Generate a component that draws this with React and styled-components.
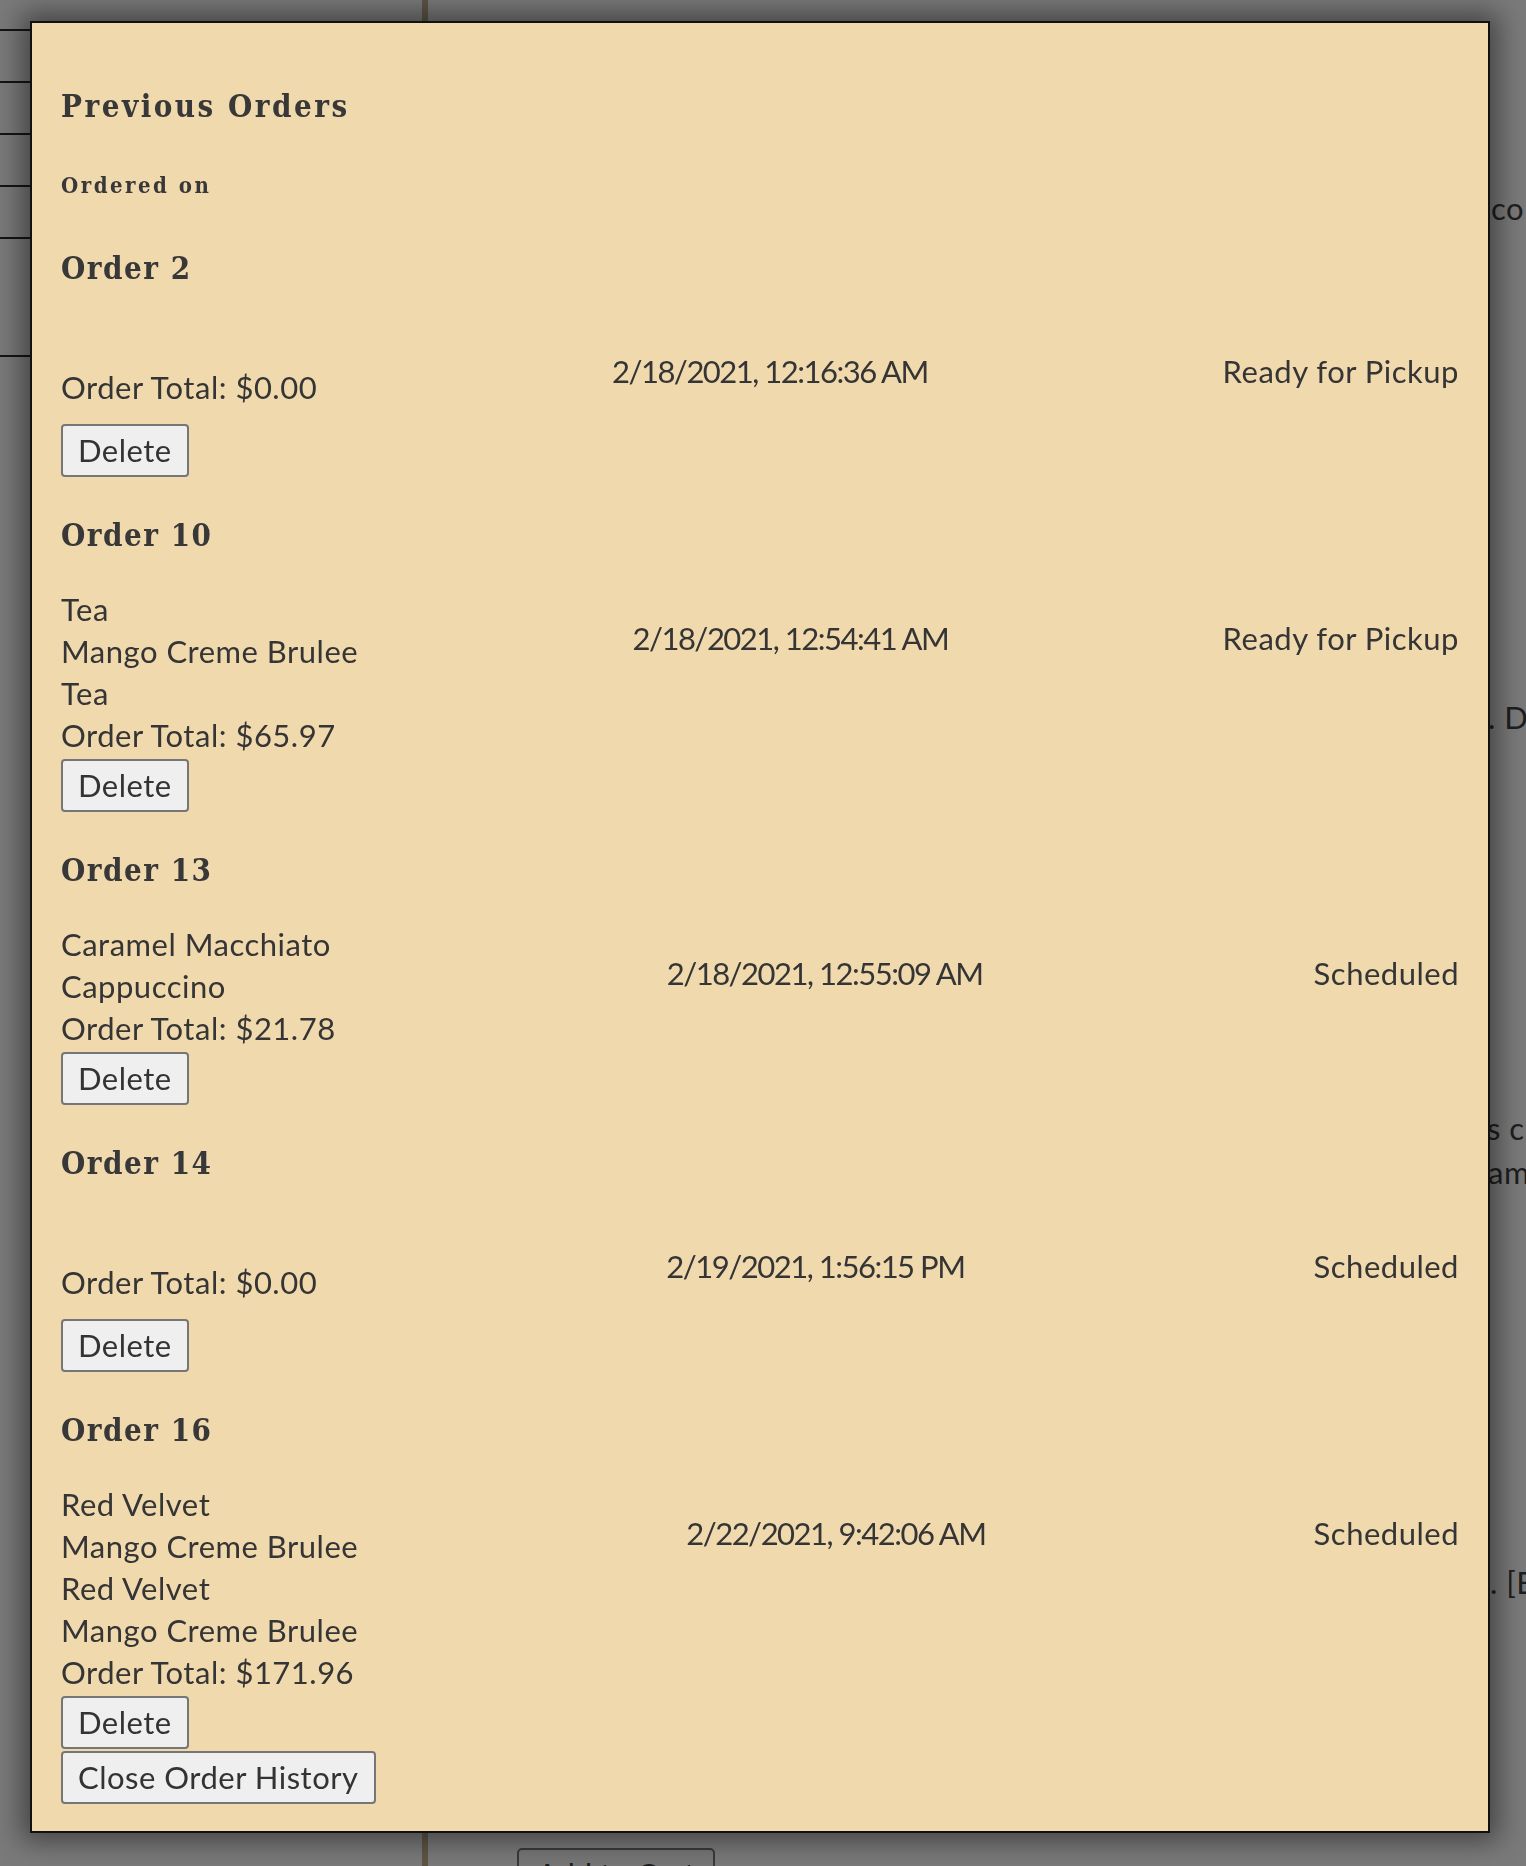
import React from 'react';
import styled, { createGlobalStyle } from 'styled-components';

const GlobalStyle = createGlobalStyle`
  html, body {
    margin: 0;
    padding: 0;
  }
  body {
    width: 1526px;
    height: 1866px;
    overflow: hidden;
    background: #7a7a7a;
    font-family: Lato, "Noto Sans", sans-serif;
  }
`;

const orders = [
    { id: 2, items: [], total: '$0.00', date: '2/18/2021, 12:16:36 AM', status: 'Ready for Pickup' },
    { id: 10, items: ['Tea', 'Mango Creme Brulee', 'Tea'], total: '$65.97', date: '2/18/2021, 12:54:41 AM', status: 'Ready for Pickup' },
    { id: 13, items: ['Caramel Macchiato', 'Cappuccino'], total: '$21.78', date: '2/18/2021, 12:55:09 AM', status: 'Scheduled' },
    { id: 14, items: [], total: '$0.00', date: '2/19/2021, 1:56:15 PM', status: 'Scheduled' },
    { id: 16, items: ['Red Velvet', 'Mango Creme Brulee', 'Red Velvet', 'Mango Creme Brulee'], total: '$171.96', date: '2/22/2021, 9:42:06 AM', status: 'Scheduled' },
];

// the page that sits behind the modal (dimmed)
const Page = styled.div`
    display: flex;
    height: 1866px;
    background: #7a7a7a;
`

const Sidebar = styled.nav`
    width: 422px;
    flex-shrink: 0;
    display: flex;
    flex-direction: column;
`

const NavRow = styled.div`
    height: ${p => p.$h}px;
    border-bottom: 2px solid #151515;
`

const Divider = styled.div`
    width: 6px;
    flex-shrink: 0;
    background: #5f5546;
`

const Main = styled.main`
    flex: 1;
    min-width: 0;
    overflow: hidden;
    display: flex;
    flex-direction: column;
    font-family: Lato, sans-serif;
    font-size: 31px;
    line-height: 44px;
    letter-spacing: 0.5px;
    color: #1e1e1e;
`

const Blurb = styled.p`
    margin: ${p => p.$top}px 0 0;
    padding-left: ${p => p.$indent}px;
    white-space: nowrap;
`

const CartButton = styled.button`
    align-self: flex-start;
    margin: 244px 0 0 89px;
    width: 198px;
    padding: 6px 15px;
    font-family: Lato, sans-serif;
    font-size: 31px;
    line-height: 37px;
    color: #1e1e1e;
    background: #777;
    border: 2px solid #3a3a3a;
    border-radius: 5px;
`

// modal
const Overlay = styled.div`
    position: fixed;
    inset: 0;
    padding: 21px 36px 0 30px;
`

const Modal = styled.div`
    background: #f1d9ae;
    border: 2px solid #111;
    box-shadow: 0 0 26px 8px rgba(0, 0, 0, 0.45);
    padding: 29px 29px 27px;
    color: #353535;
    font-family: Lato, sans-serif;
`

const Title = styled.h2`
    margin: 34px 0 0;
    font-family: "DejaVu Serif", serif;
    font-stretch: condensed;
    font-weight: bold;
    font-size: 31px;
    line-height: 40px;
    letter-spacing: 2.5px;
    color: #383838;
`

const Subtitle = styled.h4`
    margin: 44px 0 0;
    padding-bottom: 10px;
    font-family: "DejaVu Serif", serif;
    font-stretch: condensed;
    font-weight: bold;
    font-size: 22px;
    line-height: 30px;
    letter-spacing: 2.5px;
    color: #383838;
`

const OrderBlock = styled.section`
    margin-top: 38px;
`

const OrderTitle = styled.h3`
    margin: 0;
    font-family: "DejaVu Serif", serif;
    font-stretch: condensed;
    font-weight: bold;
    font-size: 31px;
    line-height: 40px;
    letter-spacing: 1.5px;
    color: #383838;
`

const Row = styled.div`
    margin-top: 33px;
    display: flex;
    justify-content: space-between;
    align-items: flex-start;
`

const ItemsColumn = styled.div`
    display: flex;
    flex-direction: column;
    align-items: flex-start;
    padding-top: ${p => (p.$empty ? 45 : 0)}px;
`

const Line = styled.div`
    font-size: 31px;
    line-height: 42px;
    letter-spacing: 0.5px;
    white-space: nowrap;
`

const Cell = styled.div`
    padding-top: 29px;
    font-size: 31px;
    line-height: 42px;
    letter-spacing: ${p => p.$spacing}px;
    white-space: nowrap;
    text-align: ${p => p.$align || 'left'};
`

const Button = styled.button`
    display: block;
    margin-top: ${p => p.$gap}px;
    padding: 6px 15px;
    font-family: Lato, sans-serif;
    font-size: 31px;
    line-height: 37px;
    letter-spacing: 0.5px;
    color: #333;
    background: #efefef;
    border: 2px solid #767676;
    border-radius: 4px;
    cursor: pointer;
`

const Order = ({ order }) => {
    const empty = order.items.length === 0;
    return (
        <OrderBlock>
            <OrderTitle>Order {order.id}</OrderTitle>
            <Row>
                <ItemsColumn $empty={empty}>
                    {order.items.map((item, i) => (
                        <Line key={i}>{item}</Line>
                    ))}
                    <Line>Order Total: {order.total}</Line>
                    <Button $gap={empty ? 16 : 3}>Delete</Button>
                </ItemsColumn>
                <Cell $spacing={-1.5}>{order.date}</Cell>
                <Cell $spacing={0.5} $align="right">{order.status}</Cell>
            </Row>
        </OrderBlock>
    );
};

const App = () => {
    return (
        <>
            <GlobalStyle />
            <Page>
                <Sidebar>
                    {[29, 50, 50, 50, 50, 116].map((h, i) => (
                        <NavRow key={i} $h={h} />
                    ))}
                </Sidebar>
                <Divider />
                <Main>
                    <Blurb $top={186} $indent={1063}>co</Blurb>
                    <Blurb $top={465} $indent={1060}>. Do</Blurb>
                    <Blurb $top={367} $indent={1059}>s c</Blurb>
                    <Blurb $top={0} $indent={1060}>am</Blurb>
                    <Blurb $top={366} $indent={1062}>. [B</Blurb>
                    <CartButton>Add to Cart</CartButton>
                </Main>
            </Page>
            <Overlay>
                <Modal>
                    <Title>Previous Orders</Title>
                    <Subtitle>Ordered on</Subtitle>
                    {orders.map(order => (
                        <Order key={order.id} order={order} />
                    ))}
                    <Button $gap={2}>Close Order History</Button>
                </Modal>
            </Overlay>
        </>
    );
};

export default App;
